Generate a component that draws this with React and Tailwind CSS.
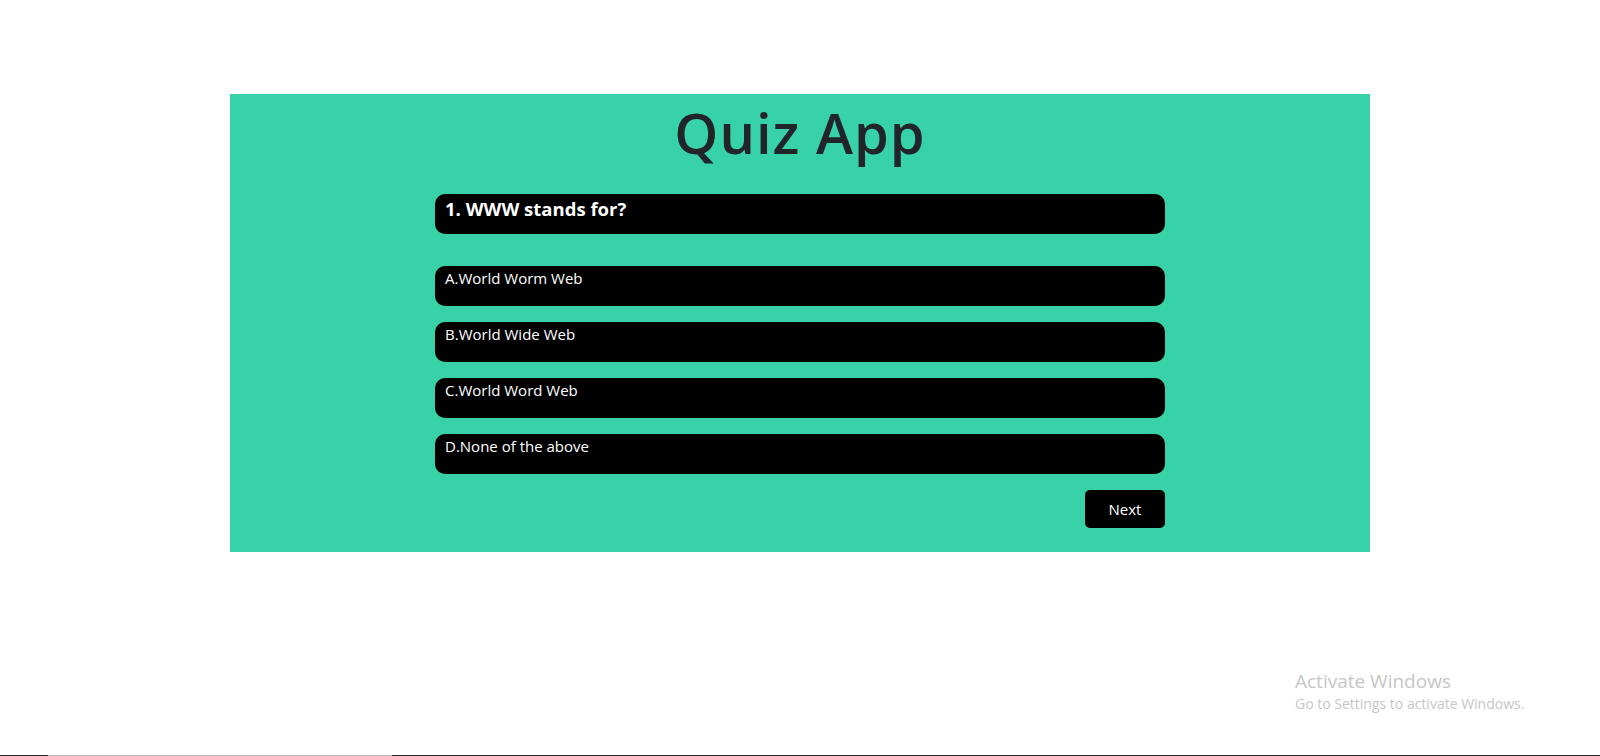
import { useState } from 'react'

const questions = [
  {
    title: '1. WWW stands for?',
    options: ['A.World Worm Web', 'B.World Wide Web', 'C.World Word Web', 'D.None of the above'],
  },
]

function App() {
  const [index, setIndex] = useState(0)
  const [picked, setPicked] = useState(null)
  const q = questions[index]

  const handleNext = () => {
    setPicked(null)
    setIndex(prev => (prev + 1) % questions.length)
  }

  return (
    <div className="relative min-h-[756px] bg-white pt-[94px] font-['Open_Sans',sans-serif]">
      {/* Quiz panel */}
      <div className="mx-auto w-[1140px] h-[458px] bg-[#37d2a7] flex flex-col items-center">
        <h1 className="mt-[5px] text-[56px] leading-[67px] font-semibold tracking-[1px] text-[#212529]">Quiz App</h1>

        <div className="w-[730px] mt-[28px]">
          <div className="h-[40px] rounded-[10px] bg-black text-white text-[18.5px] font-bold pl-[10px] leading-[26px] pt-[2px]">
            {q.title}
          </div>

          <div className="mt-[32px] flex flex-col gap-[16px]">
            {q.options.map((opt, i) => (
              <div
                key={opt}
                onClick={() => setPicked(i)}
                className={`h-[40px] rounded-[10px] bg-black text-white text-[15px] pl-[10px] leading-[24px] cursor-pointer ${picked === i ? 'ring-2 ring-white' : ''}`}
              >
                {opt}
              </div>
            ))}
          </div>

          <div className="mt-[16px] flex justify-end">
            <button
              onClick={handleNext}
              className="w-[80px] h-[38px] rounded-[5px] bg-black text-white text-[15px]"
            >
              Next
            </button>
          </div>
        </div>
      </div>

      {/* Windows watermark */}
      <div className="absolute left-[1295px] top-[668px] text-[#c6c6c6] font-['Open_Sans',sans-serif]">
        <div className="text-[19px] leading-[26px]">Activate Windows</div>
        <div className="text-[14px] leading-[20px]">Go to Settings to activate Windows.</div>
      </div>

      {/* taskbar edge */}
      <div className="absolute left-0 right-0 top-[755px] h-[1px] flex">
        <div className="w-[48px] bg-[#202020]" />
        <div className="w-[344px] bg-[#b5b5b5]" />
        <div className="flex-1 bg-[#202020]" />
      </div>
    </div>
  )
}

export default App
